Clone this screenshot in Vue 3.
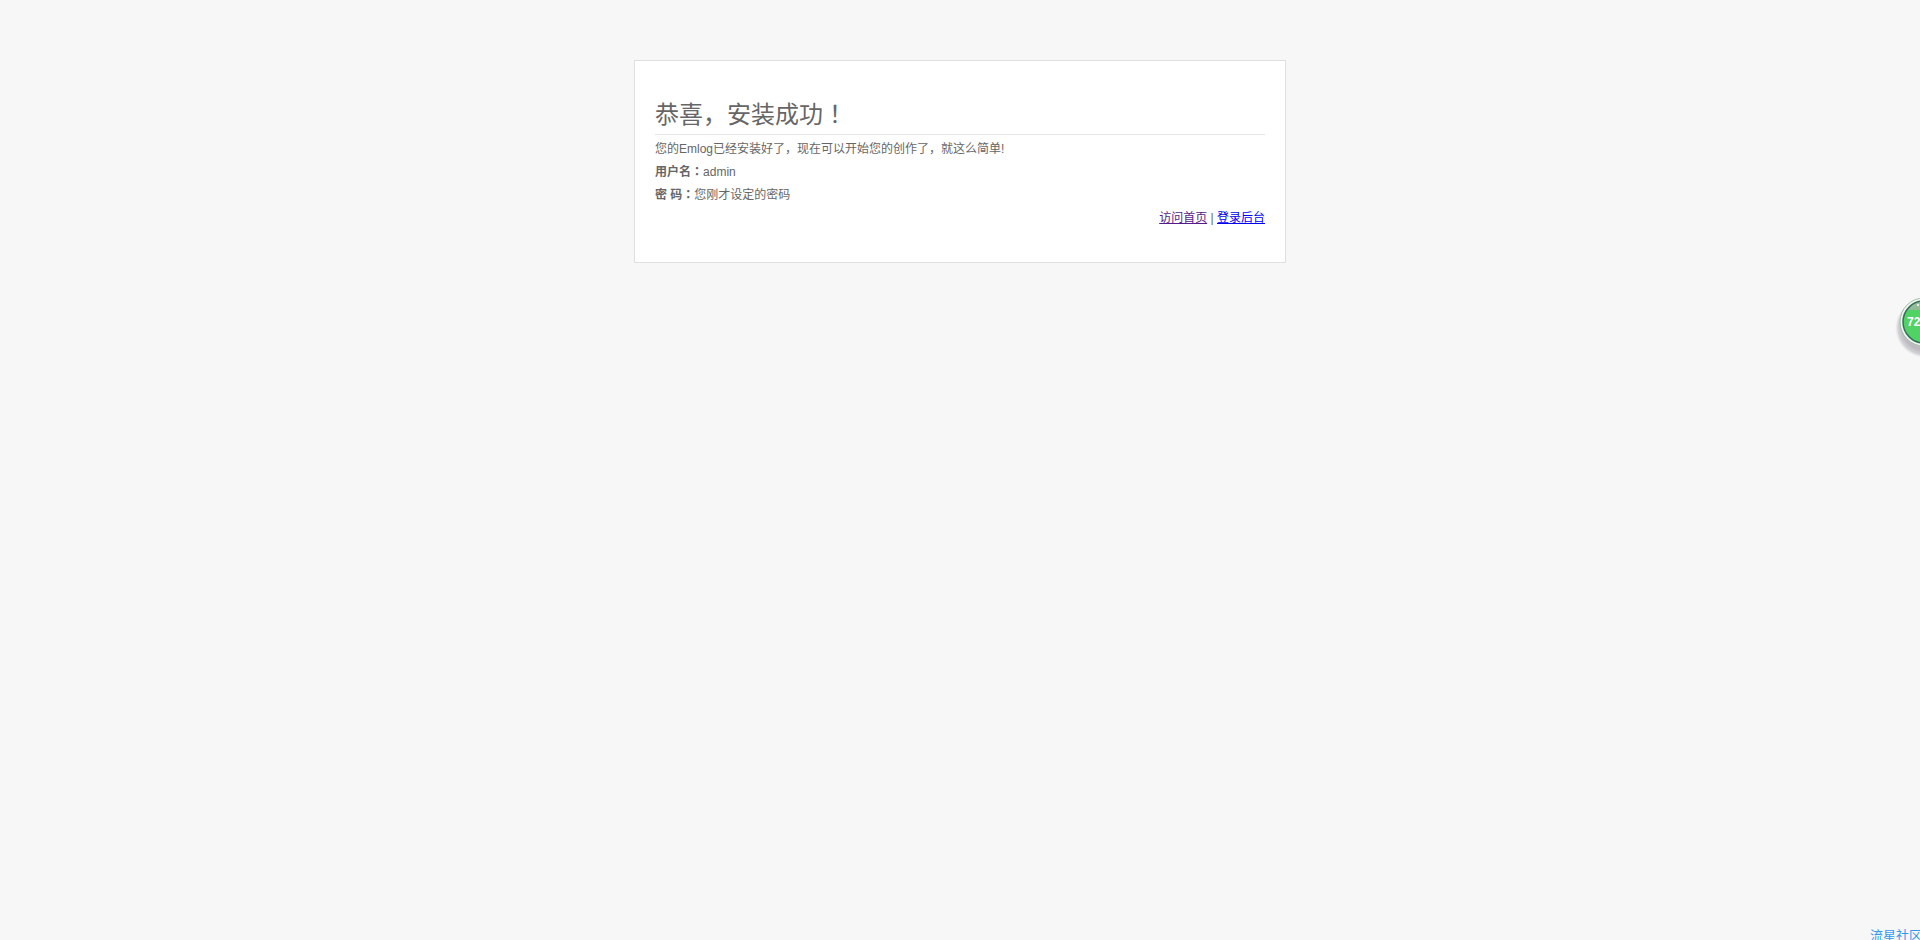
<script setup>
const score = 72
</script>

<template>
  <div class="page">
    <main class="card">
      <h1 class="title">恭喜，安装成功<span class="mark">！</span></h1>
      <p class="line">您的Emlog已经安装好了，现在可以开始您的创作了，就这么简单!</p>
      <p class="line"><b>用户名<span class="mark">：</span></b>admin</p>
      <p class="line"><b>密 码<span class="mark">：</span></b>您刚才设定的密码</p>
      <p class="line links"><a class="visited" href="#home">访问首页</a> | <a href="#admin">登录后台</a></p>
    </main>

    <svg class="gauge" viewBox="0 0 28 64" width="28" height="64">
      <defs>
        <radialGradient id="shade">
          <stop offset="0.75" stop-color="#bdbbc1" />
          <stop offset="0.9" stop-color="#d4d3d7" />
          <stop offset="1" stop-color="#e6e6e8" stop-opacity="0" />
        </radialGradient>
        <linearGradient id="gloss" x1="0" y1="0" x2="0" y2="1">
          <stop offset="0" stop-color="#a3bda5" />
          <stop offset="1" stop-color="#8fbb93" />
        </linearGradient>
        <clipPath id="disc"><circle cx="32" cy="28" r="21" /></clipPath>
      </defs>
      <circle cx="33" cy="34" r="30" fill="url(#shade)" />
      <circle cx="32" cy="28" r="24" fill="#f1f5f1" stroke="#a5bea7" />
      <circle cx="32" cy="28" r="21" fill="#50d264" />
      <rect x="8" y="4" width="48" height="12" fill="url(#gloss)" clip-path="url(#disc)" />
      <circle cx="32" cy="28" r="21" fill="none" stroke="#34705c" stroke-width="1.5" />
      <circle cx="26" cy="11" r="1" fill="#ffffff" />
      <text class="score" x="15" y="32">{{ score }}</text>
    </svg>

    <a class="community" href="#community">流星社区</a>
  </div>
</template>

<style>
body {
  background: #f7f7f7;
}
</style>

<style scoped>
.page {
  position: relative;
  box-sizing: border-box;
  min-height: 100vh;
  padding: 60px 20px;
  overflow: hidden;
  background: #f7f7f7;
  color: #666666;
  font-family: "Liberation Sans", "Noto Sans CJK SC", sans-serif;
  font-size: 12px;
  line-height: 18px;
}

.card {
  box-sizing: border-box;
  max-width: 652px;
  margin: 0 auto;
  padding: 36px 20px 30px;
  border: 1px solid #dfdfdf;
  background: #ffffff;
}

.title {
  margin: 0 0 5px;
  padding-bottom: 1px;
  border-bottom: 1px solid #e6e6e6;
  font-size: 24px;
  font-weight: normal;
  line-height: 36px;
}

.line {
  margin: 0 0 5px;
}

.mark {
  font-family: "Noto Sans CJK TC", sans-serif;
  line-height: 1;
}

.links {
  text-align: right;
}

.links a {
  color: #0000ee;
}

.links .visited {
  color: #551a8b;
}

.gauge {
  position: absolute;
  top: 294px;
  right: 0;
}

.score {
  fill: #ffffff;
  font-family: "Liberation Sans", sans-serif;
  font-size: 12px;
  font-weight: bold;
}

.community {
  position: absolute;
  right: -2px;
  bottom: -5px;
  color: #3399ee;
  font-size: 13px;
  text-decoration: none;
}
</style>
